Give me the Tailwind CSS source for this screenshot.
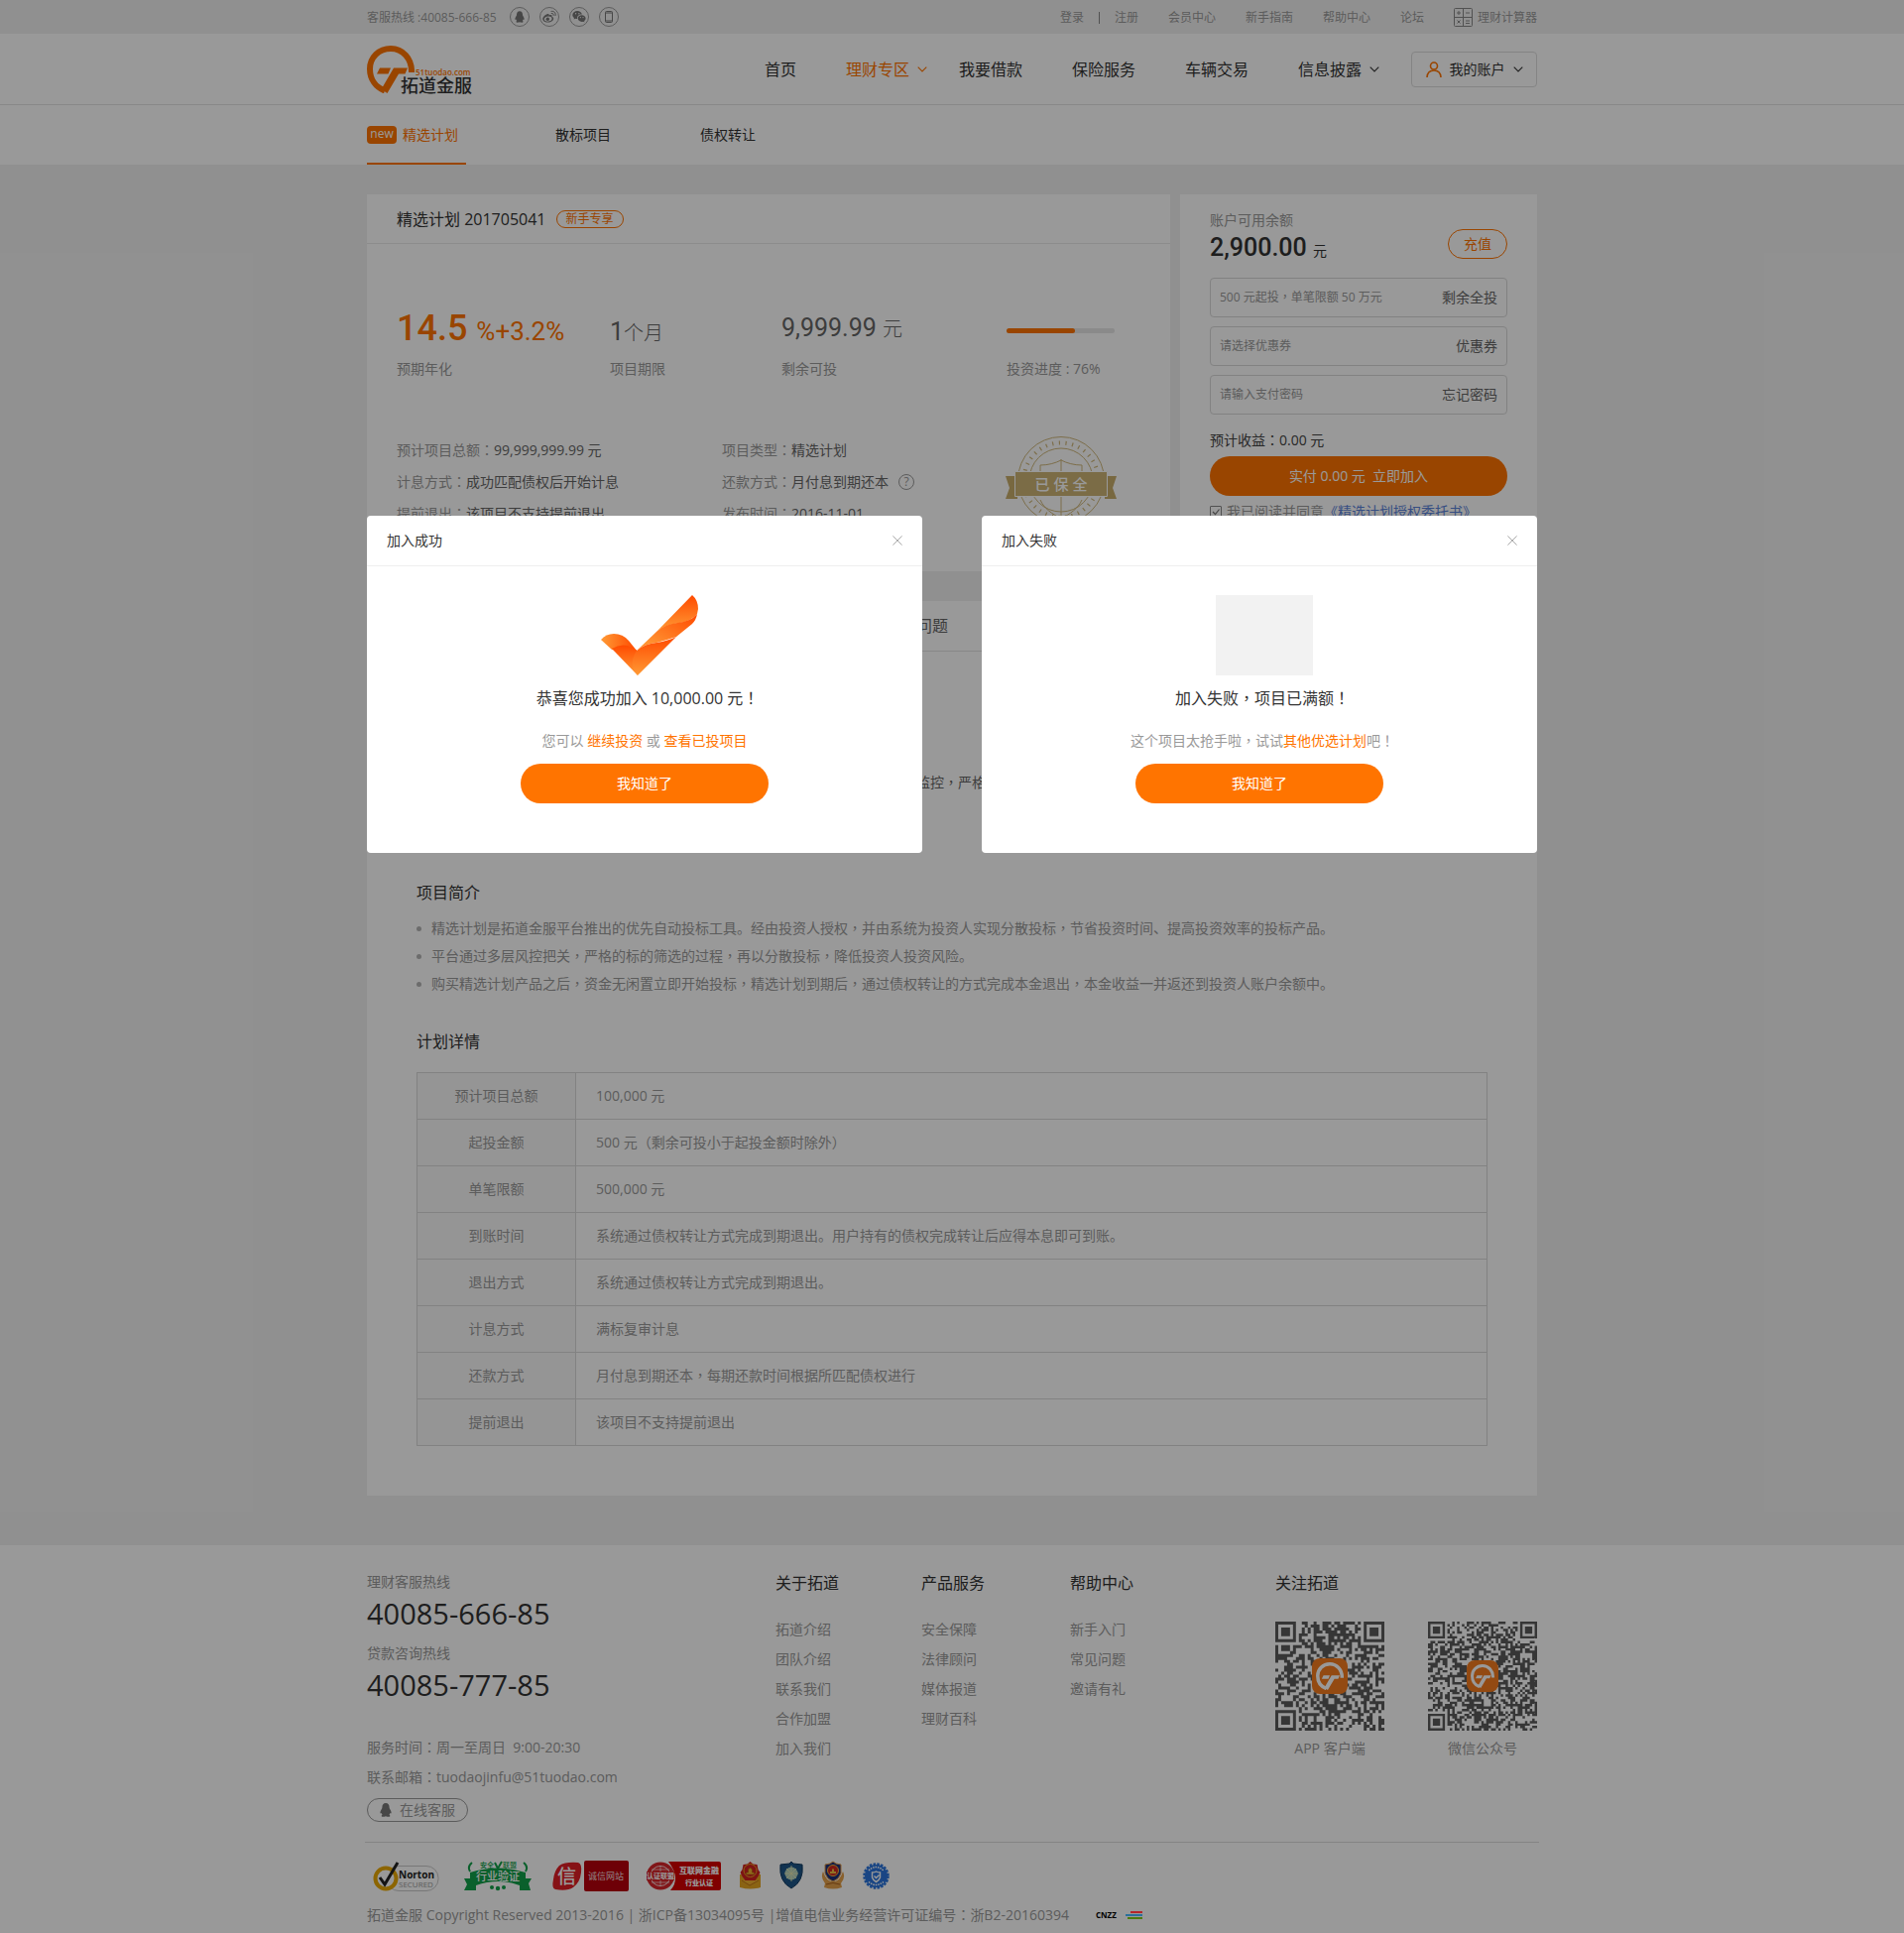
<!DOCTYPE html>
<html lang="zh-CN">
<head>
<meta charset="utf-8">
<meta name="viewport" content="width=device-width, initial-scale=1">
<title>拓道金服 - 精选计划</title>
<script src="https://cdn.jsdelivr.net/npm/@tailwindcss/browser@4"></script>
</head>
<body class="relative min-h-screen bg-[#f1f1f1] font-['Open_Sans','Noto_Sans_CJK_SC',sans-serif] text-sm leading-5 text-[#999]">

<!-- shared symbols -->
<svg class="hidden">
  <symbol id="chevron" viewBox="0 0 10 6"><path d="M.7.7 5 5 9.3.7" fill="none" stroke="currentColor" stroke-width="1.1"/></symbol>
  <symbol id="close" viewBox="0 0 10 10"><path d="M.4.4 9.6 9.6M9.6.4.4 9.6" fill="none" stroke="currentColor"/></symbol>
  <symbol id="penguin" viewBox="0 0 12 14"><path d="M6 0C3.6 0 2.4 1.900 2.400 4.200c0 .6-.1 1-.4 1.500C1.200 7 .400 8.300.400 9.700c0 .8.5 1 1.200.3.200.7.500 1.200 1 1.700-.7.300-1 .7-.900 1.200.1.800 1.500 1 2.900.8.600-.1 1-.3 1.400-.5.400.200.800.400 1.400.5 1.400.200 2.800 0 2.900-.8.100-.5-.2-.9-.9-1.200.5-.5.800-1 1-1.700.7.700 1.200.5 1.200-.3 0-1.400-.8-2.700-1.600-4-.3-.5-.4-.9-.4-1.500C9.600 1.900 8.400 0 6 0z" fill="currentColor"/></symbol>
  <symbol id="mark" viewBox="0 0 48 48">
    <path d="M45 27C45.500 13 36 3 24 3S3 12 3 23.500C3 34 9 42 18 45.500" fill="none" stroke="currentColor" stroke-width="6"/>
    <path d="M13 22.500h11l-2.500 6H10zM27 22.500h14l-2.500 6H32L20.500 48 14.500 44z" fill="currentColor"/>
  </symbol>
</svg>

<div class="h-[34px] bg-[#f1f1f1] text-xs">
  <div class="mx-auto flex h-full max-w-[1180px] items-center justify-between">
    <div class="flex items-center gap-2.5">
      <span class="pt-0.5 pr-[3px]">客服热线 :40085-666-85</span>
      <a href="#" aria-label="QQ" class="flex size-5 items-center justify-center rounded-full border border-[#999] text-[#777]"><svg class="h-3 w-2.5"><use href="#penguin"/></svg></a>
      <a href="#" aria-label="微博" class="flex size-5 items-center justify-center rounded-full border border-[#999] text-[#777]"><svg class="size-3.5" viewBox="0 0 14 14"><path fill-rule="evenodd" d="M5.500 4C3 4.500.3 7 .3 9.200c0 2 2.500 3.400 5.300 3.400 3.500 0 5.600-2 5.600-3.800 0-1.200-.9-1.700-1.700-2 .3-1 .1-1.700-.8-1.800-.7-.1-1.500.1-2.200.4C6.800 4.300 6.400 3.900 5.500 4zm.2 2.600c2.200-.2 3.800.8 3.900 2.100.1 1.400-1.500 2.700-3.700 2.900-2.200.2-4-.8-4.100-2.200-.1-1.300 1.700-2.600 3.900-2.800z" fill="currentColor"/><circle cx="5.300" cy="9.200" r="1.700" fill="currentColor"/><path d="M9 1.400c2.700-.6 4.700 1.500 4.100 4.200M9.200 3.400c1.400-.2 2.200.7 2 2" fill="none" stroke="currentColor" stroke-linecap="round"/></svg></a>
      <a href="#" aria-label="微信" class="flex size-5 items-center justify-center rounded-full border border-[#999] text-[#777]"><svg class="size-3.5" viewBox="0 0 14 14"><path fill-rule="evenodd" d="M5.200 1C2.500 1 .3 2.700.3 5c0 1.300.7 2.300 1.700 3l-.4 1.500L3.300 8.700c.6.200 1.200.3 1.800.3C4.800 6.300 6.900 4.500 9.900 4.600 9.400 2.400 7.500 1 5.200 1zM3.600 3.100a.7.700 0 1 1 0 1.400.7.700 0 0 1 0-1.400zm3.300 0a.7.700 0 1 1 0 1.400.7.700 0 0 1 0-1.400zM9.700 5.300c-2.300 0-4 1.500-4 3.300s1.700 3.300 4 3.300c.5 0 1-.1 1.400-.2l1.300.7-.3-1.200c.9-.6 1.500-1.500 1.500-2.600 0-1.800-1.800-3.300-3.900-3.300zM8.400 7a.6.600 0 1 1 0 1.200.6.600 0 0 1 0-1.200zm2.600 0a.6.600 0 1 1 0 1.200.6.600 0 0 1 0-1.200z" fill="currentColor"/></svg></a>
      <a href="#" aria-label="手机版" class="flex size-5 items-center justify-center rounded-full border border-[#999] text-[#777]"><svg class="h-3 w-2" viewBox="0 0 8 12"><rect x=".5" y=".5" width="7" height="11" rx="1" fill="none" stroke="currentColor"/><path d="M.5 2h7M.5 10h7" stroke="currentColor"/></svg></a>
    </div>
    <nav class="flex items-center gap-[30px] pt-0.5">
      <span class="flex items-center gap-[15px]"><a href="#">登录</a><i class="h-3 w-px bg-[#888]"></i><a href="#">注册</a></span>
      <a href="#">会员中心</a><a href="#">新手指南</a><a href="#">帮助中心</a><a href="#">论坛</a>
      <a href="#" class="flex items-center gap-1"><svg class="size-5" viewBox="0 0 20 20" fill="none" stroke="#888"><rect x=".5" y=".5" width="18" height="18" rx="1"/><path d="M9.500.5v18M.5 9.500h18M3 5h4M5 3v4M12 5h4M3.500 12.500l3 3M6.500 12.500l-3 3M12 13h4M12 15.500h4"/></svg>理财计算器</a>
    </nav>
  </div>
</div>

<header class="border-b border-[#e3e3e3] bg-white text-base text-[#333]">
  <div class="mx-auto flex h-[71px] max-w-[1180px] items-center">
    <a href="#" aria-label="拓道金服">
      <svg class="h-12 w-[108px] overflow-visible" viewBox="0 0 108 48">
        <use href="#mark" width="48" height="48" class="text-[#ff7400]"/>
        <text x="49" y="30" font-size="8" font-weight="600" fill="#ff7400">51tuodao.com</text>
        <text x="34" y="47" font-size="18" font-weight="500" fill="#333">拓道金服</text>
      </svg>
    </a>
    <nav class="ml-auto mr-[50px] flex items-center gap-[50px]">
      <a href="#">首页</a>
      <a href="#" class="-mr-[18px] flex items-center gap-2 text-[#ff7400]">理财专区<svg class="h-1.5 w-2.5"><use href="#chevron"/></svg></a>
      <a href="#">我要借款</a>
      <a href="#">保险服务</a>
      <a href="#">车辆交易</a>
      <a href="#" class="-mr-[18px] flex items-center gap-2">信息披露<svg class="h-1.5 w-2.5"><use href="#chevron"/></svg></a>
    </nav>
    <button type="button" class="flex h-9 w-[127px] items-center justify-center gap-2 rounded-sm border border-[#ddd] text-sm">
      <svg class="size-4" viewBox="0 0 16 16" fill="none" stroke="#ff7400" stroke-width="1.600"><circle cx="8" cy="4.500" r="3.500"/><path d="M1 16c.3-4.500 3-7 7-7s6.700 2.500 7 7"/></svg>我的账户<svg class="h-1.5 w-2.5"><use href="#chevron"/></svg>
    </button>
  </div>
</header>

<div class="bg-white text-[#333]">
  <nav class="mx-auto flex h-[60px] max-w-[1180px] items-stretch gap-[90px]">
    <a href="#" class="flex w-[100px] items-center gap-1.5 border-b-2 border-[#ff7400] pt-0.5 text-[#ff7400]"><span class="h-[18px] w-[30px] rounded-sm bg-[#ff7400] text-center text-xs leading-4 text-white">new</span>精选计划</a>
    <a href="#" class="flex items-center">散标项目</a>
    <a href="#" class="flex items-center">债权转让</a>
  </nav>
</div>

<main class="mx-auto mt-[30px] max-w-[1180px]">
  <div class="flex gap-2.5">
    <section class="h-[380px] flex-1 bg-white">
      <div class="flex h-[50px] items-center gap-2.5 border-b border-[#e9e9e9] px-[30px]">
        <h1 class="text-base text-[#333]">精选计划 201705041</h1>
        <span class="rounded-full border border-[#ff7400] px-[9px] text-xs leading-4 text-[#ff7400]">新手专享</span>
      </div>
      <div class="flex h-[136px] px-[30px] pt-[65px]">
        <div class="flex w-[215px] flex-col justify-between">
          <p class="font-['Roboto'] text-[36px] font-medium leading-10 text-[#ff7400]">14.5 <span class="text-[26px] font-normal">%+3.2%</span></p>
          <p>预期年化</p>
        </div>
        <div class="flex w-[173px] flex-col justify-between">
          <p class="font-['Roboto','Noto_Sans_CJK_SC'] text-[25px] leading-[48px] text-[#666]">1<span class="text-xl font-light">个月</span></p>
          <p>项目期限</p>
        </div>
        <div class="flex w-[227px] flex-col justify-between">
          <p class="font-['Roboto','Noto_Sans_CJK_SC'] text-[25px] leading-10 text-[#666]">9,999.99 <span class="text-xl font-light">元</span></p>
          <p>剩余可投</p>
        </div>
        <div class="flex w-[109px] flex-col justify-between pt-5">
          <div class="h-[5px] rounded-full bg-[#e6e6e6]"><div class="h-full rounded-full bg-[#ff7400]" style="width:63%"></div></div>
          <p>投资进度 : 76%</p>
        </div>
      </div>
      <div class="flex px-[30px] pt-14 leading-8">
        <dl class="w-[328px]">
          <div class="flex"><dt>预计项目总额：</dt><dd class="text-[#666]">99,999,999.99 元</dd></div>
          <div class="flex"><dt>计息方式：</dt><dd class="text-[#666]">成功匹配债权后开始计息</dd></div>
          <div class="flex"><dt>提前退出：</dt><dd class="text-[#666]">该项目不支持提前退出</dd></div>
        </dl>
        <dl class="w-[286px]">
          <div class="flex"><dt>项目类型：</dt><dd class="text-[#666]">精选计划</dd></div>
          <div class="flex items-center"><dt>还款方式：</dt><dd class="text-[#666]">月付息到期还本</dd><button type="button" aria-label="还款方式说明" class="ml-2.5 size-4 rounded-full border border-[#999] text-xs leading-[14px]">?</button></div>
          <div class="flex"><dt>发布时间：</dt><dd class="text-[#666]">2016-11-01</dd></div>
        </dl>
        <svg class="h-[92px] w-28" viewBox="0 0 112 92" fill="none" stroke="#d0b87c">
          <circle cx="56" cy="46" r="43.500"/><circle cx="56" cy="46" r="32"/>
          <circle cx="56" cy="46" r="37.500" stroke-width="4" stroke-dasharray="1.200 5.500"/>
          <path d="M56 25v60M35 42V31c8 0 15-2 21-5 6 3 13 5 21 5v11M35 66c4 9 12 14 21 19 9-5 17-10 21-19"/>
          <path d="M0 42h12v23H0l4-11zM112 42h-12v23h12l-4-11z" fill="#c9ae6c" stroke="none"/>
          <path d="M9.500 37.500h93v25h-93z" fill="#cdb475" stroke="#fff"/>
          <text x="56" y="56" font-size="15" font-weight="500" fill="#fff" stroke="none" text-anchor="middle" xml:space="preserve">已 保 全</text>
        </svg>
      </div>
    </section>

    <form class="w-[360px] bg-white px-[30px] pt-4">
      <div class="flex items-start justify-between">
        <div>
          <p>账户可用余额</p>
          <p class="font-['Roboto','Noto_Sans_CJK_SC'] text-[25px] font-medium leading-9 text-[#333]">2,900.00 <span class="text-sm font-normal">元</span></p>
        </div>
        <button type="button" class="mt-[19px] h-[30px] w-[60px] rounded-full border border-[#ff7400] text-[#ff7400]">充值</button>
      </div>
      <div class="mt-3 flex flex-col gap-[9px] text-[#666]">
        <div class="flex h-10 items-center rounded-sm border border-[#d9d9d9] px-[9px]">
          <label for="amount" class="sr-only">投资金额</label>
          <input id="amount" lang="zh-TW" class="min-w-0 flex-1 text-xs outline-none placeholder:text-[#999]" placeholder="500 元起投，单笔限额 50 万元"><button type="button">剩余全投</button>
        </div>
        <div class="flex h-10 items-center rounded-sm border border-[#d9d9d9] px-[9px]">
          <label for="coupon" class="sr-only">优惠券</label>
          <input id="coupon" class="min-w-0 flex-1 text-xs outline-none placeholder:text-[#999]" placeholder="请选择优惠券"><button type="button">优惠券</button>
        </div>
        <div class="flex h-10 items-center rounded-sm border border-[#d9d9d9] px-[9px]">
          <label for="paypwd" class="sr-only">支付密码</label>
          <input id="paypwd" type="password" class="min-w-0 flex-1 text-xs outline-none placeholder:text-[#999]" placeholder="请输入支付密码"><a href="#">忘记密码</a>
        </div>
      </div>
      <p class="mt-4 text-[#444]">预计收益：0.00 元</p>
      <button type="button" class="mt-1.5 h-10 w-full whitespace-pre rounded-full bg-[#ff7400] text-white">实付 0.00 元  立即加入</button>
      <div class="mt-1.5 flex items-center gap-[5px]">
        <span class="relative flex size-3">
          <input id="agree" type="checkbox" checked class="peer size-3 appearance-none rounded-[1px] border border-[#888]">
          <svg class="pointer-events-none absolute inset-0 hidden size-3 peer-checked:block" viewBox="0 0 12 12"><path d="M3 6l2.500 2.500L9.500 3.500" fill="none" stroke="#777" stroke-width="1.200"/></svg>
        </span>
        <label for="agree">我已阅读并同意<a href="#" class="text-[#5b83d9]">《精选计划授权委托书》</a></label>
      </div>
    </form>
  </div>

  <section class="mt-[30px] bg-white pb-[50px]">
    <nav class="flex h-[51px] items-center gap-[172px] border-b border-[#e3e3e3] px-[50px] text-base text-[#666]">
      <a href="#" class="text-[#ff7400]">项目详情</a><a href="#">加入记录</a><a href="#">常见问题</a>
    </nav>
    <div class="px-[50px] pt-[38px]">
      <h2 class="text-base leading-6 text-[#333]">安全保障</h2>
      <ul class="pt-7 leading-7 text-[#666]">
        <li class="pl-3.5">风险备用金保障，资金安全有保证。</li>
        <li class="pl-3.5">平台设立专业的风险控制团队对每一笔借款从申请到还款都进行全流程的审核与监控，严格把关。</li>
      </ul>
      <h2 class="mt-[85px] text-base leading-6 text-[#333]">项目简介</h2>
      <ul class="mt-2.5 leading-7">
        <li class="flex items-center gap-2.5"><i class="size-[5px] rounded-full bg-[#b5b5b5]"></i><span>精选计划是拓道金服平台推出的优先自动投标工具。经由投资人授权，并由系统为投资人实现分散投标，节省投资时间、提高投资效率的投标产品。</span></li>
        <li class="flex items-center gap-2.5"><i class="size-[5px] rounded-full bg-[#b5b5b5]"></i><span>平台通过多层风控把关，严格的标的筛选的过程，再以分散投标，降低投资人投资风险。</span></li>
        <li class="flex items-center gap-2.5"><i class="size-[5px] rounded-full bg-[#b5b5b5]"></i><span>购买精选计划产品之后，资金无闲置立即开始投标，精选计划到期后，通过债权转让的方式完成本金退出，本金收益一并返还到投资人账户余额中。</span></li>
      </ul>
      <h2 class="mt-8 text-base leading-6 text-[#333]">计划详情</h2>
      <table class="mt-[19px] w-full border-collapse text-left [&_td]:h-[47px] [&_td]:border [&_td]:border-[#d9d9d9] [&_td]:px-5 [&_th]:w-40 [&_th]:border [&_th]:border-[#d9d9d9] [&_th]:bg-[#f8f8f8] [&_th]:text-center [&_th]:font-normal">
        <tr><th scope="row">预计项目总额</th><td>100,000 元</td></tr>
        <tr><th scope="row">起投金额</th><td>500 元（剩余可投小于起投金额时除外）</td></tr>
        <tr><th scope="row">单笔限额</th><td>500,000 元</td></tr>
        <tr><th scope="row">到账时间</th><td>系统通过债权转让方式完成到期退出。用户持有的债权完成转让后应得本息即可到账。</td></tr>
        <tr><th scope="row">退出方式</th><td>系统通过债权转让方式完成到期退出。</td></tr>
        <tr><th scope="row">计息方式</th><td>满标复审计息</td></tr>
        <tr><th scope="row">还款方式</th><td>月付息到期还本，每期还款时间根据所匹配债权进行</td></tr>
        <tr><th scope="row">提前退出</th><td>该项目不支持提前退出</td></tr>
      </table>
    </div>
  </section>
</main>

<footer class="mt-[50px] bg-white">
  <div class="mx-auto max-w-[1180px] pt-[26px] pb-2">
    <div class="flex">
      <div class="w-[412px] pt-px">
        <p>理财客服热线</p>
        <p class="mt-0.5 text-[29px] leading-10 text-[#333]">40085-666-85</p>
        <p class="mt-2.5">贷款咨询热线</p>
        <p class="mt-0.5 text-[29px] leading-10 text-[#333]">40085-777-85</p>
        <p class="mt-7 whitespace-pre leading-[30px]">服务时间：周一至周日  9:00-20:30</p>
        <p class="leading-[30px]">联系邮箱：tuodaojinfu@51tuodao.com</p>
        <button type="button" class="mt-1.5 flex h-6 w-[102px] items-center justify-center gap-2 rounded-full border border-[#999]"><svg class="h-3.5 w-3 text-[#777]"><use href="#penguin"/></svg>在线客服</button>
      </div>
      <nav class="w-[147px]"><h3 class="text-base leading-6 text-[#333]">关于拓道</h3>
        <ul class="mt-5 leading-[30px]"><li><a href="#">拓道介绍</a></li><li><a href="#">团队介绍</a></li><li><a href="#">联系我们</a></li><li><a href="#">合作加盟</a></li><li><a href="#">加入我们</a></li></ul></nav>
      <nav class="w-[150px]"><h3 class="text-base leading-6 text-[#333]">产品服务</h3>
        <ul class="mt-5 leading-[30px]"><li><a href="#">安全保障</a></li><li><a href="#">法律顾问</a></li><li><a href="#">媒体报道</a></li><li><a href="#">理财百科</a></li></ul></nav>
      <nav class="w-[207px]"><h3 class="text-base leading-6 text-[#333]">帮助中心</h3>
        <ul class="mt-5 leading-[30px]"><li><a href="#">新手入门</a></li><li><a href="#">常见问题</a></li><li><a href="#">邀请有礼</a></li></ul></nav>
      <div class="flex-1"><h3 class="text-base leading-6 text-[#333]">关注拓道</h3>
        <div class="mt-[27px] flex justify-between text-center">
          <figure class="w-[110px]"><div class="relative size-[110px]"><svg class="size-full" data-qr="37" data-seed="7"></svg><span class="absolute inset-0 m-auto flex size-9 items-center justify-center rounded-lg bg-[#f57c1f] text-white"><svg class="size-7"><use href="#mark"/></svg></span></div><figcaption class="mt-2">APP 客户端</figcaption></figure>
          <figure class="w-[110px]"><div class="relative size-[110px]"><svg class="size-full" data-qr="45" data-seed="23"></svg><span class="absolute inset-0 m-auto flex size-8 items-center justify-center rounded-lg bg-[#f57c1f] text-white"><svg class="size-6"><use href="#mark"/></svg></span></div><figcaption class="mt-2">微信公众号</figcaption></figure>
        </div>
      </div>
    </div>
    <div class="-mx-0.5 mt-5 h-px bg-[#ddd]"></div>
    <div class="mt-[18px] flex items-center gap-[18px] pl-1.5">
      <svg class="h-8 w-[72px]" viewBox="0 0 72 32"><rect x="14" y="5.500" width="52" height="25" rx="12" fill="#fff" stroke="#c9c9c9"/><circle cx="13" cy="18" r="10.500" fill="#fff" stroke="#eaa900" stroke-width="4"/><path d="M7 17l5 7L25 2" fill="none" stroke="#222" stroke-width="3"/><text x="26" y="18" font-size="10" font-weight="700" fill="#222">Norton</text><text x="26" y="27" font-size="8" fill="#999">SECURED</text></svg>
      <svg class="h-8 w-[72px]" viewBox="0 0 72 32"><path d="M8 12Q36 3 64 12v6h6l-3 5 2 7H58v-5Q36 17 14 25v5H2l3-6-3-6h6z" fill="#12a04a"/><text x="36" y="20" font-size="11" font-weight="500" fill="#fff" text-anchor="middle">行业验证</text><text x="18" y="7" font-size="7" font-weight="500" fill="#12a04a">安全</text><text x="41" y="7" font-size="7" font-weight="500" fill="#12a04a">联盟</text><path d="M33 2l3 6 4-7M10 2q-5 4-2 9M62 2q5 4 2 9" stroke="#12a04a" stroke-width="2" fill="none"/><g fill="#12a04a"><circle cx="30" cy="27" r="2"/><circle cx="36" cy="28" r="2.200"/><circle cx="42" cy="27" r="2"/></g></svg>
      <svg class="h-8 w-[78px]" viewBox="0 0 78 32"><path d="M8 5Q14 1 27 2q4 1 3 10-1 10-8 15-6 4-18 2Q0 28 2 19 3 10 8 5z" fill="#e01f26"/><text x="15.500" y="23" font-size="19" font-weight="500" fill="#fff" text-anchor="middle">信</text><rect x="33" width="45" height="31" rx="2" fill="#b8000d"/><text x="55" y="19" font-size="9" fill="#f0d8d8" text-anchor="middle">诚信网站</text></svg>
      <svg class="h-8 w-[75px]" viewBox="0 0 75 32"><path d="M22 1h51a2 2 0 0 1 2 2v25a2 2 0 0 1-2 2H24q11-12-2-29z" fill="#d60000"/><circle cx="14" cy="15.500" r="14" fill="#d8262b"/><circle cx="14" cy="15.500" r="10" fill="none" stroke="#fff" stroke-width=".8"/><path d="M14 5v21M5 9h18M5 22h18" stroke="#fff" stroke-width=".6"/><path d="M0 11h28v9H0z" fill="#d8262b"/><text x="14" y="18" font-size="7" font-weight="700" fill="#fff" text-anchor="middle">认证联盟</text><text x="53" y="13" font-size="8" font-weight="900" fill="#fff" text-anchor="middle">互联网金融</text><text x="53" y="25" font-size="7" font-weight="900" fill="#fff" text-anchor="middle">行业认证</text></svg>
      <svg class="h-8 w-[23px]" viewBox="0 0 23 32"><path d="M1 14h21v13q-10 3-21 0z" fill="#e6a520"/><path d="M11.500 1l3 2.500 4 .5 1 5 2 3-2 4-3 4h-10l-3-4-2-4 2-3 1-5 4-.5z" fill="#d02020"/><circle cx="11.500" cy="10" r="6.500" fill="none" stroke="#e6a520"/><path d="M7.500 14h8v-2h-2V9l-2-2-2 2v3h-2zM3 20l8 5 9-5" fill="#f0b030" stroke="#b06010" stroke-width=".7"/></svg>
      <svg class="h-8 w-6" viewBox="0 0 24 32"><path d="M12 1l2 2 9 1q2 17-11 24Q-1 21 1 4l9-1z" fill="#1d5687" stroke="#123a60"/><circle cx="12" cy="13" r="6.500" fill="#b4d3bd"/><path d="M12 5v16M5 13h14M7 8l10 10M17 8L7 18" stroke="#e8e6ae" stroke-width=".8"/></svg>
      <svg class="h-8 w-6" viewBox="0 0 24 32"><path d="M2 11q-3 6 2 12l-1 4q9 3 18 0l-1-4q5-6 2-12-3 10-10 10T2 11z" fill="#e5a04a"/><path d="M12 1l3 2 5 1v9q-2 6-8 8-6-2-8-8V4l5-1z" fill="#1d2f78" stroke="#e5a04a"/><circle cx="12" cy="10" r="5.500" fill="#d0281e" stroke="#e8b040"/><path d="M9 13h6v-2h-2V9l-1-1-1 1v2H9z" fill="#f0c040"/><path d="M5 24q7-3 14 0" fill="none" stroke="#a86220"/></svg>
      <svg class="h-8 w-[27px]" viewBox="0 0 27 32"><circle cx="13.500" cy="15.500" r="11.500" fill="#2a74dc"/><circle cx="13.500" cy="15.500" r="12" fill="none" stroke="#2a74dc" stroke-width="2.500" stroke-dasharray="2.500 1.300"/><path d="M9.500 12q2.500 0 4-1 1.500 1 4 1v5q-1 3-4 4.500-3-1.500-4-4.500zM11.500 15.500l2 2 3-3" fill="none" stroke="#fff" stroke-width="1.400"/><path d="M6 10q7-7 15 0M6 21.500q7 6 15 0" fill="none" stroke="#fff" stroke-width="1.500" stroke-dasharray="1.500 1"/></svg>
    </div>
    <div class="mt-[13px] flex items-center"><p>拓道金服 Copyright Reserved 2013-2016 | 浙ICP备13034095号 |增值电信业务经营许可证编号：浙B2-20160394</p>
      <a href="#" class="relative z-20 ml-[27px] flex items-center gap-2 text-[8px] font-bold leading-3 text-black">CNZZ<svg class="h-2.5 w-[18px]" viewBox="0 0 18 10"><path d="M6 1h12v2H6z" fill="#b5242a"/><path d="M1 4h17v2H1z" fill="#2a709c"/><path d="M3 7h15v2H3z" fill="#4d7a0d"/></svg></a>
    </div>
  </div>
</footer>

<div class="absolute inset-0 z-10 bg-black/40"></div>

<div class="absolute inset-x-0 top-[520px] z-20">
  <div class="mx-auto flex max-w-[1180px] justify-between gap-5">
    <div role="dialog" aria-labelledby="ok-title" class="h-[340px] w-[560px] rounded bg-white">
      <div class="flex h-[51px] items-center justify-between border-b border-[#eee] px-5 text-[#333]"><h2 id="ok-title">加入成功</h2><button type="button" aria-label="关闭" class="text-[#aaa]"><svg class="size-2.5"><use href="#close"/></svg></button></div>
      <div class="flex flex-col items-center pt-[29px]">
        <svg class="ml-2.5 h-[81px] w-[98px]" viewBox="0 0 98 81">
          <defs>
            <linearGradient id="a" x1="0" y1="0" x2="0" y2="1"><stop stop-color="#ff4a00"/><stop offset="1" stop-color="#ff9a35"/></linearGradient>
            <linearGradient id="b" x1="0" y1="0" x2="1" y2="0"><stop stop-color="#ff9a35"/><stop offset="1" stop-color="#ff4a00"/></linearGradient>
            <linearGradient id="c" x1="1" y1="0" x2="0" y2="1"><stop stop-color="#ff4a00"/><stop offset=".8" stop-color="#ff9433"/></linearGradient>
          </defs>
          <path d="M0 45Q5 39 13 39q9 0 15 7l8 10-25-1z" fill="url(#b)"/>
          <path d="M11 54q8-5 16-3l9 4.500L37 81z" fill="url(#a)"/>
          <path d="M57 36L92 0q6 5 6 14l-1 5q-6 7-17 9-13 1-23 8z" fill="url(#a)"/>
          <path d="M36 56l21-20q9-7 20-8 13-1 20-9-1 6-5 10L76 42q-9 3-20 6-12 1-20 8z" fill="url(#c)"/>
          <path d="M37 81q-10-11-1-25 8-7 20-8 12-2 20-6z" fill="url(#a)"/>
        </svg>
        <p class="mt-[11px] pl-1.5 text-base leading-6 text-[#333]">恭喜您成功加入 10,000.00 元！</p>
        <p class="mt-[21px]">您可以 <a href="#" class="text-[#ff7400]">继续投资</a> 或 <a href="#" class="text-[#ff7400]">查看已投项目</a></p>
        <button type="button" class="mt-[13px] h-10 w-[250px] rounded-full bg-[#ff7400] text-white">我知道了</button>
      </div>
    </div>
    <div role="dialog" aria-labelledby="fail-title" class="h-[340px] w-[560px] rounded bg-white">
      <div class="flex h-[51px] items-center justify-between border-b border-[#eee] px-5 text-[#333]"><h2 id="fail-title">加入失败</h2><button type="button" aria-label="关闭" class="text-[#aaa]"><svg class="size-2.5"><use href="#close"/></svg></button></div>
      <div class="flex flex-col items-center pt-[29px]">
        <div class="ml-2.5 h-[81px] w-[98px] bg-[#f2f2f2]"></div>
        <p class="mt-[11px] pl-1.5 text-base leading-6 text-[#333]">加入失败，项目已满额！</p>
        <p class="mt-[21px] pl-1.5">这个项目太抢手啦，试试<a href="#" class="text-[#ff7400]">其他优选计划</a>吧！</p>
        <button type="button" class="mt-[13px] h-10 w-[250px] rounded-full bg-[#ff7400] text-white">我知道了</button>
      </div>
    </div>
  </div>
</div>

<script>
// Tags full-width colons, commas and exclamation marks so the font uses its centred forms.
document.querySelectorAll('p, dt, dd, td, li, li span').forEach(function (el) {
  Array.from(el.childNodes).forEach(function (node) {
    if (node.nodeType !== 3 || !/[：，！]/.test(node.data)) return;
    var out = document.createDocumentFragment();
    node.data.split(/([：，！])/).forEach(function (part) {
      if (!/^[：，！]$/.test(part)) { out.append(part); return; }
      var mark = document.createElement('span');
      mark.lang = 'zh-TW';
      mark.textContent = part;
      out.append(mark);
    });
    node.replaceWith(out);
  });
});

// Draws a QR-style module grid: three finder squares plus pseudo-random data modules.
document.querySelectorAll('[data-qr]').forEach(function (svg) {
  var n = +svg.dataset.qr, s = +svg.dataset.seed, d = '';
  function finder(x, y) {
    var r = Math.max(Math.abs(x - 3), Math.abs(y - 3));
    return r > 4 ? null : r !== 4 && r !== 2;
  }
  for (var y = 0; y < n; y++) for (var x = 0; x < n; x++) {
    s = (s * 1103515245 + 12345) % 2147483648;
    var f = [finder(x, y), finder(n - 1 - x, y), finder(x, n - 1 - y)].find(function (v) { return v !== null; });
    if (f === undefined) f = (s >> 12) % 100 < 52;
    if (f) d += 'M' + x + ' ' + y + 'h1v1h-1z';
  }
  svg.setAttribute('viewBox', '0 0 ' + n + ' ' + n);
  svg.innerHTML = '<path fill="#5a5a5a" d="' + d + '"/>';
});
</script>
</body>
</html>
